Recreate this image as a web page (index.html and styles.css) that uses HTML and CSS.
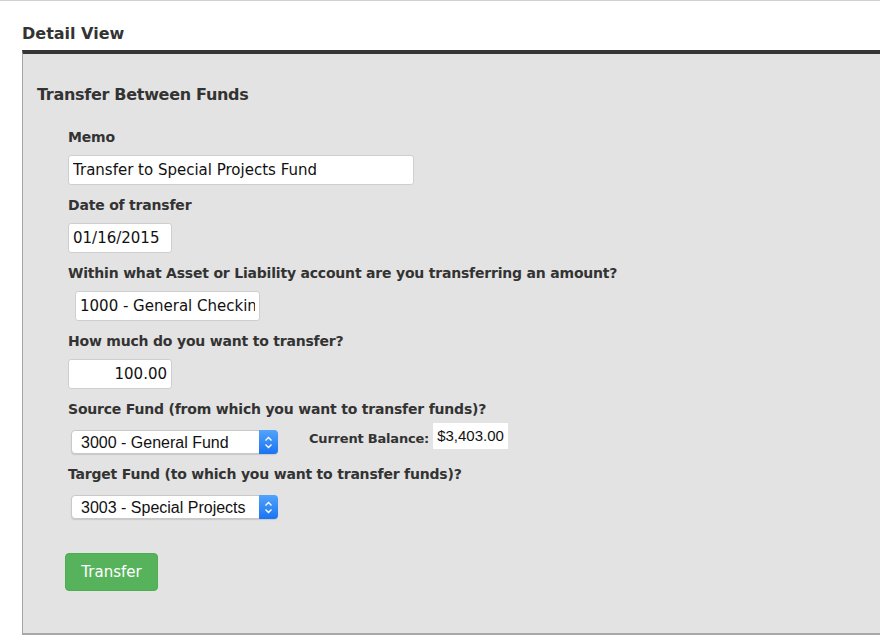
FILE: index.html
```html
<!doctype html>
<html>
  <head>
    <meta charset="utf-8">
    <title>Detail View</title>
    <meta name="viewport" content="width=device-width, initial-scale=1">
    <link rel="stylesheet" href="styles.css">
  </head>
  <body>
    <div class="page">
      <h2 class="page-title">Detail View</h2>
      <div class="panel">
        <h3 class="panel-title">Transfer Between Funds</h3>
        <form class="transfer-form">
          <label class="field-label">Memo</label>
          <input class="field-input memo" type="text" value="Transfer to Special Projects Fund">

          <label class="field-label">Date of transfer</label>
          <input class="field-input date" type="text" value="01/16/2015">

          <label class="field-label">Within what Asset or Liability account are you transferring an amount?</label>
          <input class="field-input account" type="text" value="1000 - General Checking">

          <label class="field-label">How much do you want to transfer?</label>
          <input class="field-input amount" type="text" value="100.00">

          <label class="field-label">Source Fund (from which you want to transfer funds)?</label>
          <div class="select-row">
            <div class="select-wrap">
              <select class="fund-select">
                <option>3000 - General Fund</option>
              </select>
              <span class="stepper">
                <svg width="9" height="13" viewBox="0 0 9 13"><path d="M1.5 4.5 L4.5 1.5 L7.5 4.5 M1.5 8.5 L4.5 11.5 L7.5 8.5" fill="none" stroke="#fff" stroke-width="1.4"/></svg>
              </span>
            </div>
            <span class="balance-label">Current Balance:</span>
            <span class="balance-value">$3,403.00</span>
          </div>

          <label class="field-label">Target Fund (to which you want to transfer funds)?</label>
          <div class="select-row">
            <div class="select-wrap">
              <select class="fund-select">
                <option>3003 - Special Projects</option>
              </select>
              <span class="stepper">
                <svg width="9" height="13" viewBox="0 0 9 13"><path d="M1.5 4.5 L4.5 1.5 L7.5 4.5 M1.5 8.5 L4.5 11.5 L7.5 8.5" fill="none" stroke="#fff" stroke-width="1.4"/></svg>
              </span>
            </div>
          </div>

          <button class="btn-transfer" type="button">Transfer</button>
        </form>
      </div>
    </div>
  </body>
</html>
```

FILE: styles.css
```css
html, body {
  margin: 0;
  padding: 0;
  background: #fff;
}
body {
  border-top: 1px solid #d0d0d0;
  font-family: "DejaVu Sans", Lato, sans-serif;
  color: #333;
}
.page {
  padding: 22px 0 0 22px;
}
.page-title {
  margin: 0 0 5px;
  font-size: 16px;
  line-height: 22px;
  font-weight: bold;
  color: #333;
}
.panel {
  background: #e3e3e3;
  border-top: 4px solid #363636;
  border-left: 1px solid #a5a5a5;
  border-bottom: 2px solid #a8a8a8;
  padding: 29px 0 42px 14px;
}
.panel-title {
  margin: 0 0 20px;
  font-size: 16px;
  line-height: 24px;
  font-weight: bold;
  letter-spacing: -0.3px;
}
.transfer-form {
  display: flex;
  flex-direction: column;
  align-items: flex-start;
  padding-left: 31px;
}
.field-label {
  display: block;
  margin: 0 0 8px;
  font-size: 14px;
  line-height: 20px;
  font-weight: bold;
  letter-spacing: -0.2px;
  color: #333;
}
.field-input {
  box-sizing: border-box;
  height: 30px;
  margin: 0 0 10px;
  padding: 0 4px;
  border: 1px solid #cfcfcf;
  border-radius: 3px;
  background: #fff;
  font-family: "DejaVu Sans", Lato, sans-serif;
  font-size: 15px;
  color: #111;
}
.memo { width: 346px; }
.date { width: 104px; }
.account { width: 185px; margin-left: 7px; }
.amount { width: 104px; text-align: right; }

.select-row {
  display: flex;
  align-items: center;
  height: 30px;
  margin: 0 0 7px;
}
.select-wrap {
  position: relative;
  margin-left: 3px;
  width: 207px;
  height: 24px;
}
.fund-select {
  -webkit-appearance: none;
  appearance: none;
  box-sizing: border-box;
  width: 207px;
  height: 24px;
  padding: 0 0 0 9px;
  border: 1px solid #c8c8c8;
  border-radius: 4px;
  background: #fff;
  box-shadow: 0 1px 1px rgba(0,0,0,0.12);
  font-family: "Liberation Sans", Arial, sans-serif;
  font-size: 16px;
  color: #111;
}
.stepper {
  position: absolute;
  right: 0;
  top: 0;
  width: 19px;
  height: 24px;
  border-radius: 0 4px 4px 0;
  background: linear-gradient(#52a3fb, #1a74f1);
  display: flex;
  align-items: center;
  justify-content: center;
}
.balance-label {
  margin: 0 0 8px 31px;
  font-size: 13px;
  font-weight: bold;
  letter-spacing: -0.2px;
}
.balance-value {
  margin: 0 0 12px 4px;
  padding: 0 4px;
  height: 26px;
  line-height: 26px;
  background: #fff;
  font-family: "Liberation Sans", Arial, sans-serif;
  font-size: 15px;
  color: #111;
}
.btn-transfer {
  margin: 24px 0 0 -3px;
  width: 93px;
  height: 38px;
  border: 1px solid #4cae4c;
  border-radius: 4px;
  background: #57b35b;
  color: #fff;
  font-family: "DejaVu Sans", Lato, sans-serif;
  font-size: 15px;
}
```
